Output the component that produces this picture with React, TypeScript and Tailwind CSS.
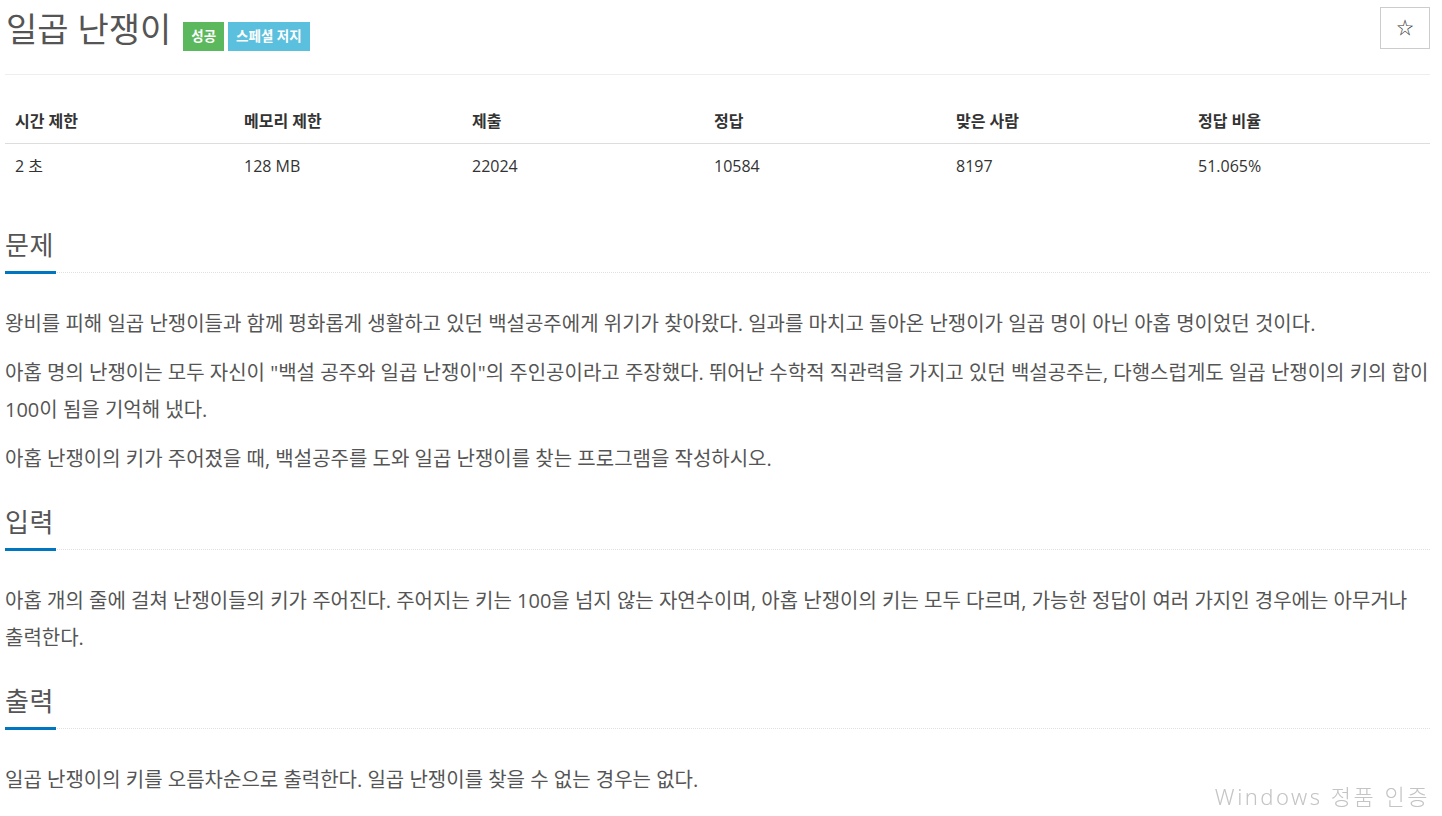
import React from 'react';

const font = { fontFamily: '"Open Sans", "Noto Sans CJK KR", sans-serif' };

const stats = [
  { label: '시간 제한', value: '2 초' },
  { label: '메모리 제한', value: '128 MB' },
  { label: '제출', value: '22024' },
  { label: '정답', value: '10584' },
  { label: '맞은 사람', value: '8197' },
  { label: '정답 비율', value: '51.065%' },
];

const Headline: React.FC<{ title: string }> = ({ title }) => (
  <div className="border-b border-dotted border-[#e0e0e0] mb-[32px]">
    <h2 className="inline-block text-[26px] leading-[32px] text-[#555] pb-[10px] border-b-[3px] border-[#0076c0] -mb-[2px] w-[51px] whitespace-nowrap tracking-[0.5px]">
      {title}
    </h2>
  </div>
);

const Section: React.FC<{ title: string; children: React.ReactNode; className?: string }> = ({ title, children, className }) => (
  <section className={className}>
    <Headline title={title} />
    <div className="text-[20px] leading-[37px] text-[#555]">{children}</div>
  </section>
);

const App: React.FC = () => {
  return (
    <div className="relative min-h-[816px] bg-white" style={font}>
      <div className="ml-[5px] w-[1425px]">
        {/* title */}
        <div className="flex justify-between items-start pt-[7px] pb-[23px] border-b border-[#eee]">
          <div className="flex items-start">
            <h1 className="text-[34px] leading-[44px] text-[#555] pl-px">일곱 난쟁이</h1>
            <span className="ml-[12px] mt-[15px] h-[29px] px-2 flex items-center bg-[#5cb85c] text-white text-[13.5px] font-bold">성공</span>
            <span className="ml-[4px] mt-[15px] h-[29px] px-2 flex items-center bg-[#5bc0de] text-white text-[13.5px] font-bold">스페셜 저지</span>
          </div>
          <button className="w-[50px] h-[42px] border border-[#ccc] bg-white flex items-center justify-center text-[17px] text-[#333]">
            ☆
          </button>
        </div>

        {/* stats table */}
        <div className="mt-[27px] grid grid-cols-[229px_228px_242px_242px_242px_242px] text-[#333]">
          {stats.map((s) => (
            <div key={s.label} className="px-[10px] pt-[8px] pb-[11px] leading-[22px] text-[16px] font-bold border-b border-[#ddd]">
              {s.label}
            </div>
          ))}
          {stats.map((s) => (
            <div key={s.label + 'v'} className="px-[10px] py-[11px] leading-[22px] text-[16px]">
              {s.value}
            </div>
          ))}
        </div>

        <Section title="문제" className="mt-[41px]">
          <p className="mb-[12px]">
            왕비를 피해 일곱 난쟁이들과 함께 평화롭게 생활하고 있던 백설공주에게 위기가 찾아왔다. 일과를 마치고 돌아온 난쟁이가 일곱 명이 아닌 아홉 명이었던 것이다.
          </p>
          <p className="mb-[12px] whitespace-nowrap">
            아홉 명의 난쟁이는 모두 자신이 "백설 공주와 일곱 난쟁이"의 주인공이라고 주장했다. 뛰어난 수학적 직관력을 가지고 있던 백설공주는, 다행스럽게도 일곱 난쟁이의 키의 합이
            <br />
            100이 됨을 기억해 냈다.
          </p>
          <p className="mb-[12px]">아홉 난쟁이의 키가 주어졌을 때, 백설공주를 도와 일곱 난쟁이를 찾는 프로그램을 작성하시오.</p>
        </Section>

        <Section title="입력" className="mt-[29px]">
          <p className="mb-[12px] whitespace-nowrap">
            아홉 개의 줄에 걸쳐 난쟁이들의 키가 주어진다. 주어지는 키는 100을 넘지 않는 자연수이며, 아홉 난쟁이의 키는 모두 다르며, 가능한 정답이 여러 가지인 경우에는 아무거나
            <br />
            출력한다.
          </p>
        </Section>

        <Section title="출력" className="mt-[29px]">
          <p className="mb-[12px]">일곱 난쟁이의 키를 오름차순으로 출력한다. 일곱 난쟁이를 찾을 수 없는 경우는 없다.</p>
        </Section>
      </div>

      <div
        className="fixed right-[12px] bottom-[6px] text-[22px] leading-[28px] font-light text-[#c4c4c4] tracking-[2.5px]"
        style={{ fontFamily: '"Noto Sans", "Noto Sans CJK KR", sans-serif' }}
      >
        Windows 정품 인증
      </div>
    </div>
  );
};

export default App;
